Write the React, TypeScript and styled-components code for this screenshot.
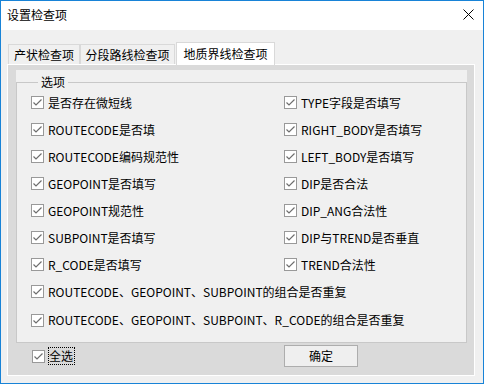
import React from "react";
import styled, { createGlobalStyle } from "styled-components";

const GlobalStyle = createGlobalStyle`
  html, body { margin: 0; padding: 0; background: #f0f0f0; }
  body { font-family: "Noto Sans CJK SC", "Noto Sans", sans-serif; font-size: 12px; color: #000; }
  * { box-sizing: border-box; }
`;

const Win = styled.div`
  width: 484px;
  height: 384px;
  border: 1px solid #1883d7;
  background: #f0f0f0;
  display: flex;
  flex-direction: column;
`;

const TitleBar = styled.div`
  height: 29px;
  background: #fff;
  display: flex;
  align-items: center;
  justify-content: space-between;
  padding: 0 9px 0 6px;
  flex-shrink: 0;
`;

const Title = styled.span`
  font-size: 12px;
  line-height: 16px;
  margin-top: -2px;
`;

const CloseIcon = styled.svg`
  display: block;
  margin-top: -2px;
`;

const Body = styled.div`
  padding: 12px 8px 0 6px;
  display: flex;
  flex-direction: column;
`;

const TabStrip = styled.div`
  display: flex;
  align-items: flex-end;
  height: 23px;
  padding-left: 1px;
  margin-bottom: -1px;
  position: relative;
  z-index: 1;
`;

const Tab = styled.div<{ $active?: boolean; $w: number }>`
  width: ${(p) => p.$w}px;
  height: ${(p) => (p.$active ? 23 : 20)}px;
  margin-bottom: ${(p) => (p.$active ? 0 : 1)}px;
  margin-left: ${(p) => (p.$active ? 1 : 0)}px;
  background: ${(p) => (p.$active ? "#fff" : "#f0f0f0")};
  border: 1px solid #d9d9d9;
  border-bottom: none;
  display: flex;
  align-items: center;
  justify-content: center;
  line-height: 16px;
  padding-top: ${(p) => (p.$active ? 0 : 1)}px;
  white-space: nowrap;
`;

const TabPage = styled.div`
  width: 468px;
  height: 312px;
  border: 1px solid #fff;
  background: #dadada;
  padding: 5px 7px 0 8px;
  display: flex;
  flex-direction: column;
`;

const Panel = styled.div`
  height: 273px;
  background: #f0f0f0;
  padding-top: 4px;
  display: flex;
  flex-direction: column;
`;

const GroupBox = styled.fieldset`
  margin: 0;
  padding: 0 0 0 14px;
  border: 1px solid #c8c8c8;
  flex: 1;
  min-width: 0;
`;

const Legend = styled.legend`
  margin-left: 7px;
  padding: 0 3px;
  line-height: 16px;
  margin-bottom: -1px;
`;

const Grid = styled.div`
  display: grid;
  grid-template-columns: 253px 1fr;
`;

const Row = styled.div<{ $h?: number; $full?: boolean }>`
  height: ${(p) => p.$h ?? 27}px;
  display: flex;
  align-items: center;
  grid-column: ${(p) => (p.$full ? "1 / span 2" : "auto")};
  white-space: nowrap;
`;

const Box = styled.span`
  width: 13px;
  height: 13px;
  border: 1px solid #999;
  background: #fff;
  display: inline-flex;
  align-items: center;
  justify-content: center;
  flex-shrink: 0;
  margin-right: 4px;
`;

const Label = styled.span<{ $focus?: boolean }>`
  line-height: 16px;
  border: 1px dotted ${(p) => (p.$focus ? "#000" : "transparent")};
  margin-left: -1px;
  padding: 0 1px 0 0;
`;

const BottomBar = styled.div`
  height: 31px;
  display: grid;
  grid-template-columns: 252px auto;
  align-items: center;
  padding: 0 0 5px 16px;
`;

const Cell = styled.div`
  display: flex;
  align-items: center;
`;

const Button = styled.button`
  width: 74px;
  height: 22px;
  border: 1px solid #adadad;
  background: #efefef;
  font-family: inherit;
  font-size: 12px;
  color: #000;
  padding: 0;
  line-height: 16px;
`;

const Check: React.FC = () => (
  <Box>
    <svg width="11" height="11" viewBox="0 0 11 11">
      <polyline points="1.5,5.5 4,8 9.5,2.5" fill="none" stroke="#6e6e6e" strokeWidth="1.2" />
    </svg>
  </Box>
);

const Item: React.FC<{ text: string; h?: number; full?: boolean }> = ({ text, h, full }) => (
  <Row $h={h} $full={full}>
    <Check />
    <Label>{text}</Label>
  </Row>
);

const pairs: [string, string][] = [
  ["是否存在微短线", "TYPE字段是否填写"],
  ["ROUTECODE是否填", "RIGHT_BODY是否填写"],
  ["ROUTECODE编码规范性", "LEFT_BODY是否填写"],
  ["GEOPOINT是否填写", "DIP是否合法"],
  ["GEOPOINT规范性", "DIP_ANG合法性"],
  ["SUBPOINT是否填写", "DIP与TREND是否垂直"],
  ["R_CODE是否填写", "TREND合法性"],
];

export default function App() {
  return (
    <>
      <GlobalStyle />
      <Win>
        <TitleBar>
          <Title>设置检查项</Title>
          <CloseIcon width="11" height="11" viewBox="0 0 11 11">
            <path d="M0.5 0.5 L10.5 10.5 M10.5 0.5 L0.5 10.5" stroke="#000" strokeWidth="1" />
          </CloseIcon>
        </TitleBar>
        <Body>
          <TabStrip>
            <Tab $w={72}>产状检查项</Tab>
            <Tab $w={95}>分段路线检查项</Tab>
            <Tab $w={99} $active>地质界线检查项</Tab>
          </TabStrip>
          <TabPage>
            <Panel>
              <GroupBox>
                <Legend>选项</Legend>
                <Grid>
                  {pairs.map(([a, b]) => (
                    <React.Fragment key={a}>
                      <Item text={a} />
                      <Item text={b} />
                    </React.Fragment>
                  ))}
                  <Item full text="ROUTECODE、GEOPOINT、SUBPOINT的组合是否重复" />
                  <Item full h={30} text="ROUTECODE、GEOPOINT、SUBPOINT、R_CODE的组合是否重复" />
                </Grid>
              </GroupBox>
            </Panel>
            <BottomBar>
              <Cell>
                <Check />
                <Label $focus>全选</Label>
              </Cell>
              <Button>确定</Button>
            </BottomBar>
          </TabPage>
        </Body>
      </Win>
    </>
  );
}
